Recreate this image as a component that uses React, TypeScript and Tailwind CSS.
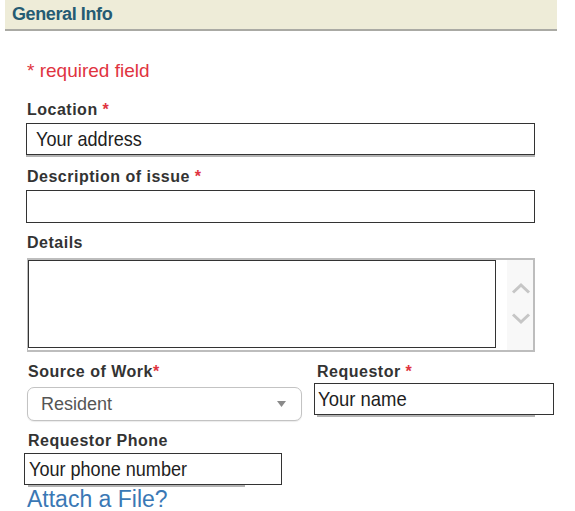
import React from "react";

const Req = ({ space = true }: { space?: boolean }) => (
  <span className="text-[#e0343f]">{space ? " *" : "*"}</span>
);

const Label = ({ children, className = "" }: { children: React.ReactNode; className?: string }) => (
  <div className={"text-[16px] leading-[18px] font-bold tracking-[0.5px] text-[#333] whitespace-nowrap " + className}>
    {children}
  </div>
);

const InputText = ({ children, className = "" }: { children: React.ReactNode; className?: string }) => (
  <span className={"inline-block origin-left scale-x-[0.86] text-[21px] leading-[30px] text-[#1e1e1e] whitespace-nowrap " + className}>
    {children}
  </span>
);

export default function App() {
  return (
    <div className="w-[575px] h-[511px] bg-white overflow-hidden font-['Liberation_Sans',Arial,sans-serif]">
      <div className="ml-[5px] w-[552px] h-[31px] bg-[#eeecd8] border-b-2 border-[#aaaaa4] pl-[7px] flex items-center">
        <h2 className="text-[18px] leading-none font-bold text-[#255b73] tracking-[-0.4px] pb-[1px]">General Info</h2>
      </div>

      <div className="pl-[26px] flex flex-col items-start">
        <div className="mt-[29px] ml-[1px] text-[19px] leading-[22px] text-[#e0343f]">* required field</div>

        <Label className="mt-[19px] ml-[1px]">
          Location<Req />
        </Label>
        <div className="mt-[4px] w-[509px] h-[32px] border border-[#333] shadow-[0_2px_0_#b3b3b3] pl-[9px] flex items-center">
          <InputText>Your address</InputText>
        </div>

        <Label className="mt-[13px] ml-[1px]">
          Description of issue<Req />
        </Label>
        <div className="mt-[4px] w-[509px] h-[33px] border border-[#333]" />

        <Label className="mt-[11px] ml-[1px]">Details</Label>
        <div className="mt-[6px] ml-[1px] w-[508px] h-[94px] border-2 border-l border-[#bdbdbd] flex">
          <div className="w-[468px] h-[88px] border border-[#333]" />
          <div className="flex-1 flex">
            <div className="ml-[11px] flex-1 bg-[#f8f8f8] flex flex-col items-center pt-[22px] gap-[19px]">
              <svg width="20" height="12" viewBox="0 0 20 12" className="ml-[1px]">
                <path d="M2 10.5 L10 3 L18 10.5" fill="none" stroke="#c6c6c6" strokeWidth="3" />
              </svg>
              <svg width="20" height="12" viewBox="0 0 20 12" className="ml-[1px]">
                <path d="M2 1.5 L10 9 L18 1.5" fill="none" stroke="#c6c6c6" strokeWidth="3" />
              </svg>
            </div>
          </div>
        </div>

        <div className="mt-[11px] flex items-start">
          <div className="flex flex-col items-start w-[288px]">
            <Label className="ml-[2px]">
              Source of Work<Req space={false} />
            </Label>
            <div className="mt-[6px] ml-[1px] w-[275px] h-[34px] rounded-[7px] border border-[#c3c3c3] shadow-[0_1px_1px_rgba(0,0,0,0.08)] bg-white flex items-center justify-between pl-[13px] pr-[15px]">
              <span className="text-[18px] text-[#555]">Resident</span>
              <svg width="9" height="6" viewBox="0 0 9 6">
                <path d="M0 0 H9 L4.5 6 Z" fill="#8a8a8a" />
              </svg>
            </div>
          </div>
          <div className="flex flex-col items-start">
            <Label className="ml-[3px]">
              Requestor<Req />
            </Label>
            <div className="mt-[2px] w-[240px] h-[32px] border border-[#333] pl-[3px] flex items-center">
              <InputText className="scale-x-[0.88]">Your name</InputText>
            </div>
            <div className="ml-[3px] w-[218px] h-[2px] bg-[#b3b3b3]" />
          </div>
        </div>

        <Label className="mt-[11px] ml-[2px]">Requestor Phone</Label>
        <div className="mt-[3px] -ml-[2px] w-[258px] h-[32px] border border-[#333] pl-[4px] flex items-center">
          <InputText className="scale-x-[0.85]">Your phone number</InputText>
        </div>
        <div className="ml-[2px] w-[217px] h-[2px] bg-[#b3b3b3]" />

        <a className="ml-[1px] text-[23px] leading-[24px] text-[#3a78b5] whitespace-nowrap">Attach a File?</a>
      </div>
    </div>
  );
}
